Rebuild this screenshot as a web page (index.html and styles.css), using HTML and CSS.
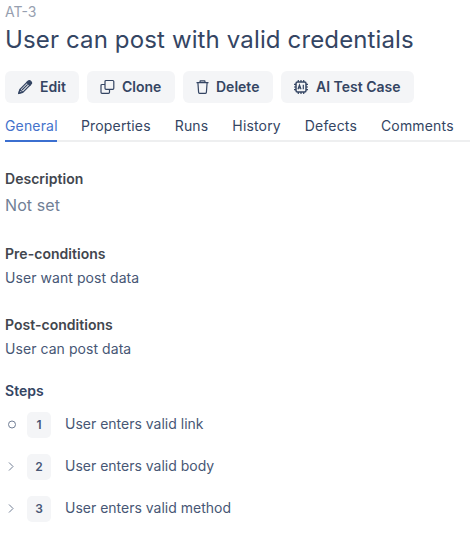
FILE: index.html
```html
<!DOCTYPE html>
<html lang="en">
<head>
<meta charset="utf-8">
<title>AT-3</title>
<link rel="stylesheet" href="styles.css">
</head>
<body>
<main class="case">
  <div class="case-id">AT-3</div>
  <h1 class="title">User can post with valid credentials</h1>
  <div class="actions">
    <button class="btn btn-edit"><svg class="icon" viewBox="0 0 16 16"><path d="M1.800 14.300l1-3.800 7.400-7.400 2.900 2.900-7.400 7.400zM3 10.500l2.600 2.600M5 11l5.700-5.700"/><path class="solid" d="M9.900 3.400l1.400-1.400a1.400 1.400 0 0 1 2 0l.9.900a1.400 1.400 0 0 1 0 2l-1.400 1.400zM1.800 14.300l.6-2 1.400 1.400z"/></svg>Edit</button>
    <button class="btn btn-clone"><svg class="icon" viewBox="0 0 16 16"><rect x="6" y="1.500" width="8.800" height="8.800" rx="1"/><path d="M6 5.500H3a1 1 0 0 0-1 1v6.800a1 1 0 0 0 1 1h6.500a1 1 0 0 0 1-1v-3"/></svg>Clone</button>
    <button class="btn btn-delete"><svg class="icon" viewBox="0 0 16 16"><path d="M1.500 3.700h12M4.800 3.500l.5-1.700h4.400l.5 1.700M2.900 3.700l.7 9.600a1 1 0 0 0 1 1h5.800a1 1 0 0 0 1-1l.7-9.600"/></svg>Delete</button>
    <button class="btn btn-ai"><svg class="icon" viewBox="0 0 16 16"><rect class="chip" x="3" y="3" width="10" height="10" rx="1.500"/><path d="M5.300 1v2M8 1v2M10.700 1v2M5.300 13v2M8 13v2M10.700 13v2M1 5.300h2M1 8h2M1 10.700h2M13 5.300h2M13 8h2M13 10.700h2M5 10.300l1.500-4.300L8 10.300M5.500 9h2M10.300 5.700v4.600"/></svg>AI Test Case</button>
  </div>
  <nav class="tabs">
    <a class="tab active">General</a><a class="tab">Properties</a><a class="tab">Runs</a><a class="tab">History</a><a class="tab">Defects</a><a class="tab">Comments</a>
  </nav>
  <section class="field field-description"><h2 class="label">Description</h2><p class="empty">Not set</p></section>
  <section class="field field-pre"><h2 class="label">Pre-conditions</h2><p class="value">User want post data</p></section>
  <section class="field field-post"><h2 class="label">Post-conditions</h2><p class="value">User can post data</p></section>
  <section class="steps">
    <h2 class="label">Steps</h2>
    <ol class="step-list">
      <li class="step"><svg class="marker" viewBox="0 0 14 14"><circle cx="7" cy="6.500" r="3.500"/></svg><span class="num">1</span><span class="step-text">User enters valid link</span></li>
      <li class="step"><svg class="marker" viewBox="0 0 14 14"><path d="M4 2.500l4 4-4 4"/></svg><span class="num">2</span><span class="step-text">User enters valid body</span></li>
      <li class="step"><svg class="marker" viewBox="0 0 14 14"><path d="M4 2.500l4 4-4 4"/></svg><span class="num">3</span><span class="step-text">User enters valid method</span></li>
    </ol>
  </section>
</main>
</body>
</html>
```

FILE: styles.css
```css
* { box-sizing: border-box; }
body { margin: 0; background: #fff; color: #344563; font-family: Inter, sans-serif; font-size: 14px; }
h1, h2, p, ol { margin: 0; padding: 0; }
.case { padding: 3px 0 0 5px; }
.case-id { height: 18px; line-height: 18px; color: #979fb0; }
.title { height: 38px; line-height: 38px; font-size: 24px; font-weight: 400; letter-spacing: .135px; white-space: nowrap; }
.actions { display: flex; gap: 8px; margin-top: 12px; }
.btn { display: flex; align-items: center; gap: 7px; height: 32px; padding: 0 0 1px 12px; border: 0; border-radius: 6px; background: #f4f5f7; color: inherit; font: 600 14px Inter, sans-serif; white-space: nowrap; }
.btn-edit { width: 74px; }
.btn-clone { width: 88px; }
.btn-delete { width: 90px; gap: 5px; }
.btn-ai { width: 133px; }
.icon { flex: none; width: 16px; height: 16px; fill: none; stroke: currentColor; stroke-width: 1.2; }
.solid { fill: currentColor; }
.chip { stroke-width: 1.5; }
.tabs { display: flex; gap: 24px; height: 39px; border-bottom: 2px solid #eeeff0; }
.tab { height: 39px; padding-top: 14px; line-height: 17px; font-weight: 400; letter-spacing: .16px; }
.active { width: 52px; color: #4472cb; border-bottom: 2px solid #3b6fd0; }
.label { height: 20px; font-size: 14px; line-height: 20px; font-weight: 600; letter-spacing: .03px; }
.field .label { color: #42464e; }
.field-description { padding-top: 27px; }
.empty { height: 32px; line-height: 32px; font-size: 16px; color: #718096; letter-spacing: .1px; }
.field-pre { padding-top: 23px; }
.value { height: 28px; line-height: 28px; color: #475775; letter-spacing: .06px; }
.field-post { padding-top: 23px; }
.steps { padding-top: 18px; }
.step-list { list-style: none; margin-top: 11px; display: grid; gap: 16px; }
.step { display: flex; align-items: center; height: 26px; }
.marker { width: 14px; height: 14px; margin-right: 8px; fill: none; stroke: #717e95; }
.num { width: 24px; height: 26px; margin-right: 14px; border-radius: 5px; background: #f4f5f7; text-align: center; line-height: 26px; font-size: 12px; font-weight: 600; color: #475775; }
.step-text { height: 26px; line-height: 24px; color: #475775; }
```
